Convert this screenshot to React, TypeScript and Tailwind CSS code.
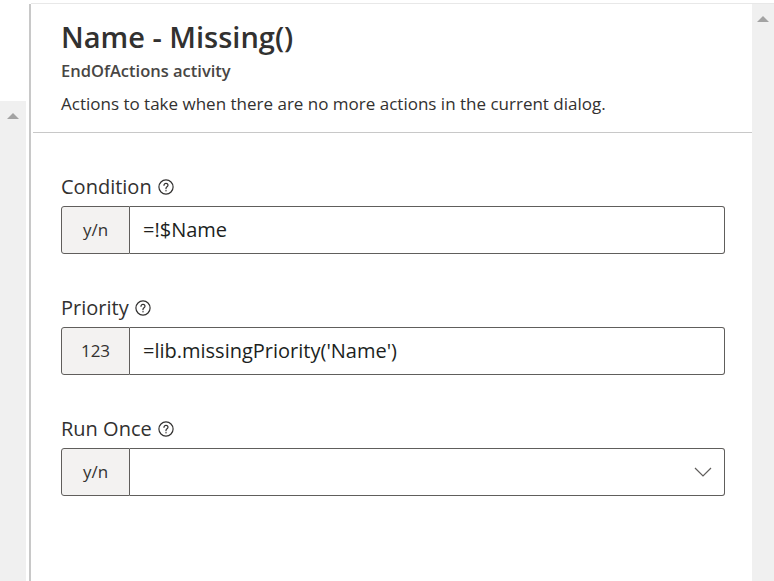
import React from 'react';

const font = { fontFamily: '"Open Sans", "Noto Sans", sans-serif' };

function HelpIcon() {
    return (
        <svg width="16" height="16" viewBox="0 0 16 16" className="ml-[6px] shrink-0" fill="none" stroke="#323130" strokeWidth="1.2">
            <circle cx="8" cy="8" r="7.1" />
            <path d="M6 6.3c0-1.2.9-2 2-2s2 .8 2 1.9c0 1.4-2 1.6-2 3.1v.4" strokeLinecap="round" />
            <circle cx="8" cy="11.8" r="0.7" fill="#323130" stroke="none" />
        </svg>
    );
}

function Field({ label, prefix, value, dropdown }: { label: string; prefix: string; value?: string; dropdown?: boolean }) {
    return (
        <div className="flex flex-col">
            <div className="flex items-center h-[26px] text-[20px] text-[#323130] mb-[6px]">
                <span>{label}</span>
                <HelpIcon />
            </div>
            <div className="flex h-[48px]">
                <div className="w-[69px] shrink-0 flex items-center justify-center bg-[#f3f2f1] border border-[#605e5c] rounded-l-[3px] text-[17px] text-[#323130]">
                    {prefix}
                </div>
                <div className="flex-1 flex items-center justify-between border border-l-0 border-[#605e5c] rounded-r-[3px] pl-[13px] pr-[12px] text-[20px] text-[#201f1e]">
                    <span>{value}</span>
                    {dropdown && (
                        <svg width="18" height="10" viewBox="0 0 18 10" fill="none" stroke="#605e5c" strokeWidth="1.2">
                            <path d="M1 1l8 8 8-8" />
                        </svg>
                    )}
                </div>
            </div>
        </div>
    );
}

export default function App() {
    return (
        <div className="w-[774px] h-[581px] flex bg-white overflow-hidden" style={font}>
            {/* left scroll strip */}
            <div className="w-[29px] shrink-0 flex flex-col">
                <div className="h-[101px]" />
                <div className="flex-1 w-[26px] bg-[#f0f0f0] flex justify-center pt-[12px]">
                    <div className="w-0 h-0 border-l-[6px] border-r-[6px] border-b-[6px] border-l-transparent border-r-transparent border-b-[#a3a3a3]" />
                </div>
            </div>
            <div className="w-[2px] shrink-0 bg-[#c8c8c8] mt-[4px]" />

            {/* main panel */}
            <div className="flex-1 flex flex-col mt-[3px] border-t border-[#e8e8e8]">
                <div className="flex flex-1">
                    <div className="flex-1 flex flex-col">
                        <header className="pl-[28px] pt-[14px] pb-[17px] border-b border-[#c8c8c8] ml-[2px]">
                            <h1 className="text-[29px] leading-[38px] font-semibold text-[#323130]">Name - Missing()</h1>
                            <p className="text-[16.5px] leading-[22px] font-semibold text-[#484644] mt-[4px]">EndOfActions activity</p>
                            <p className="text-[17px] leading-[22px] text-[#323130] mt-[11px]">
                                Actions to take when there are no more actions in the current dialog.
                            </p>
                        </header>
                        <div className="pl-[30px] pr-[27px] pt-[41px] flex flex-col gap-[41px]">
                            <Field label="Condition" prefix="y/n" value="=!$Name" />
                            <Field label="Priority" prefix="123" value="=lib.missingPriority('Name')" />
                            <Field label="Run Once" prefix="y/n" dropdown />
                        </div>
                    </div>
                    {/* right scrollbar */}
                    <div className="w-[22px] shrink-0 bg-[#f0f0f0] flex justify-center pt-[12px]">
                        <div className="w-0 h-0 border-l-[6px] border-r-[6px] border-b-[6px] border-l-transparent border-r-transparent border-b-[#a3a3a3]" />
                    </div>
                </div>
            </div>
        </div>
    );
}
